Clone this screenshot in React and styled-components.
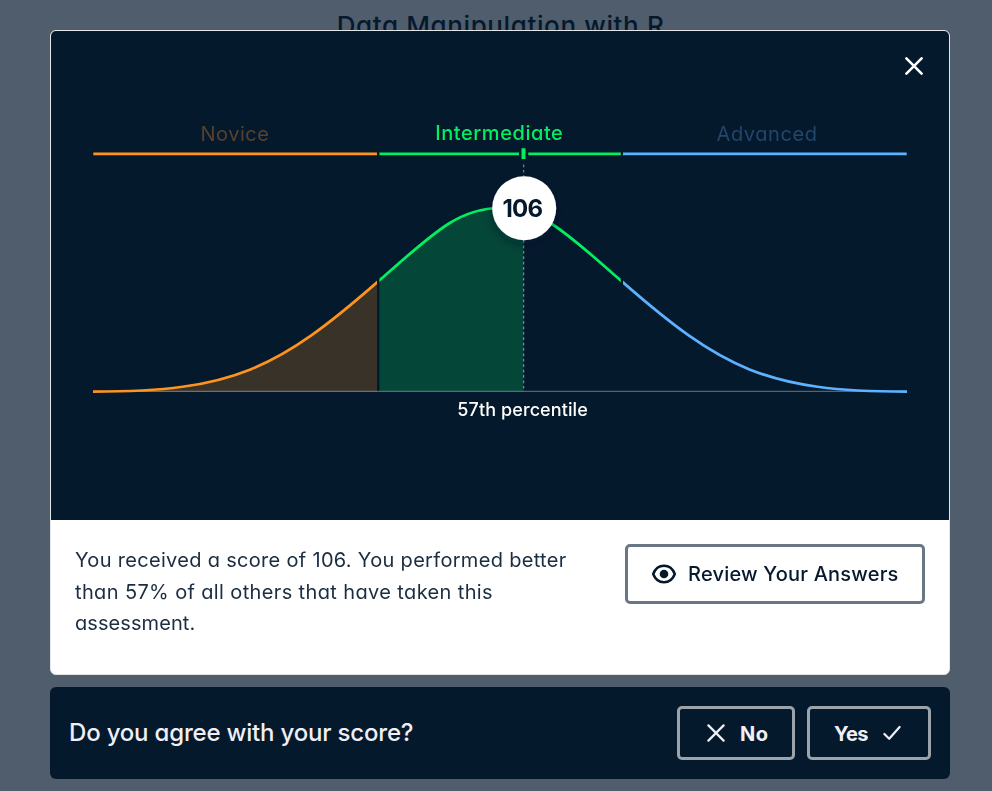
import React from 'react';
import styled, { createGlobalStyle } from 'styled-components';

const navy = '#05192d';
const orange = '#ff931e';
const green = '#03ef62';
const blue = '#5eb1ff';

const GlobalStyle = createGlobalStyle`
  * { box-sizing: border-box; }
  body {
    margin: 0;
    background: #505d6c;
    color: ${navy};
    font-family: Inter, "Liberation Sans", sans-serif;
    font-feature-settings: "cv11", "cv10";
    overflow: hidden;
  }
  button { font: inherit; font-feature-settings: inherit; cursor: pointer; }
`;

const Page = styled.main`
  height: 791px;
  overflow: hidden;
`;

const PageTitle = styled.h1`
  margin: 8px 0 0 9px;
  text-align: center;
  font-size: 26px;
  line-height: 36px;
  font-weight: 500;
  letter-spacing: 0.62px;
`;

const Overlay = styled.div`
  position: fixed;
  inset: 0;
  display: flex;
  flex-direction: column;
  gap: 12px;
  padding: 30px 42px 12px 50px;
`;

const Modal = styled.section`
  height: 645px;
  display: flex;
  flex-direction: column;
  border: 1px solid #e4e7ea;
  border-radius: 6px;
  background: #fff;
  overflow: hidden;
`;

const ChartPanel = styled.div`
  position: relative;
  height: 489px;
  flex: none;
  background: ${navy};
`;

const Chart = styled.svg`
  display: block;
  width: 898px;
  height: 489px;
`;

const ChartText = styled.text`
  font-size: ${(p) => p.$size || 20}px;
  font-weight: ${(p) => p.$weight || 400};
  fill: ${(p) => p.$color};
`;

const CloseButton = styled.button`
  position: absolute;
  top: 19px;
  right: 19px;
  width: 32px;
  height: 32px;
  padding: 0;
  display: grid;
  place-items: center;
  border: 0;
  background: none;
`;

const Result = styled.div`
  flex: 1;
  display: flex;
  justify-content: space-between;
  align-items: flex-start;
  padding: 24px;
`;

const Message = styled.p`
  margin: 0;
  padding-top: 1px;
  font-size: 20px;
  line-height: 31.5px;
  color: #1b2d40;
`;

const Line = styled.span`
  display: block;
  white-space: nowrap;
  letter-spacing: ${(p) => p.$spacing}px;
`;

const OutlineButton = styled.button`
  flex: none;
  display: flex;
  align-items: center;
  width: ${(p) => p.$width}px;
  height: ${(p) => p.$height}px;
  padding: 0 0 0 ${(p) => p.$inset}px;
  gap: ${(p) => p.$gap}px;
  border: 3px solid ${(p) => (p.$dark ? '#9ba3ab' : '#697684')};
  border-radius: 5px;
  background: transparent;
  color: ${(p) => (p.$dark ? '#efeff5' : navy)};
  font-size: 20px;
  font-weight: ${(p) => (p.$dark ? 700 : 500)};
  letter-spacing: ${(p) => p.$spacing}px;
  white-space: nowrap;
`;

const ButtonLabel = styled.span`
  padding-top: ${(p) => p.$drop || 0}px;
`;

const Feedback = styled.section`
  height: 92px;
  display: flex;
  align-items: center;
  justify-content: space-between;
  padding: 0 19px;
  border-radius: 6px;
  background: ${navy};
`;

const Question = styled.h2`
  margin: 0;
  padding-bottom: 2px;
  color: #efeff5;
  font-size: 24px;
  font-weight: 500;
  letter-spacing: -0.19px;
`;

const Actions = styled.div`
  display: flex;
  gap: 12px;
`;

const Cross = ({ color = '#efeff5', width = 2.2 }) => (
  <svg width="18" height="18" viewBox="0 0 18 18" fill="none" stroke={color} strokeWidth={width} strokeLinecap="round">
    <path d="M1.4 1.4 16.6 16.6M16.6 1.4 1.4 16.6" />
  </svg>
);

const Check = () => (
  <svg width="18" height="16" viewBox="0 0 18 16" fill="none" stroke="#efeff5" strokeWidth="2.2" strokeLinecap="round" strokeLinejoin="round">
    <path d="M1.4 9 6.2 13.8 16.6 2" />
  </svg>
);

const Eye = () => (
  <svg width="24" height="20" viewBox="0 0 24 20" fill="none">
    <path d="M1.2 10C3.2 4.6 7.5 1.7 12 1.7S20.8 4.6 22.8 10C20.8 15.4 16.5 18.3 12 18.3S3.2 15.4 1.2 10Z" stroke={navy} strokeWidth="2.6" strokeLinejoin="round" />
    <circle cx="12" cy="10" r="4.3" fill={navy} />
  </svg>
);

const curve =
  'M93 391.7C233 391.7 278 369 378 281.5C433 233.7 458 208 500 208C542 208 567 233.7 622 281.5C722 369 767 391.7 907 391.7';

function ScoreChart() {
  return (
    <Chart viewBox="51 31 898 489">
      <defs>
        <clipPath id="novice"><rect x="92.6" y="170" width="284.4" height="230" /></clipPath>
        <clipPath id="intermediate"><rect x="379.4" y="170" width="241.4" height="230" /></clipPath>
        <clipPath id="reached"><rect x="379.4" y="170" width="144.1" height="221.5" /></clipPath>
        <clipPath id="advanced"><rect x="623" y="170" width="284.4" height="230" /></clipPath>
        <filter id="shadow" x="-50%" y="-50%" width="200%" height="200%">
          <feDropShadow dx="0" dy="4" stdDeviation="5" floodColor={navy} floodOpacity="0.45" />
        </filter>
      </defs>

      <ChartText x="200.5" y="141" textLength="68.5" $color="#56412d">Novice</ChartText>
      <ChartText x="435.3" y="140" textLength="127.5" $weight={500} $color={green}>Intermediate</ChartText>
      <ChartText x="716.5" y="141" textLength="100.5" $color="#23466b">Advanced</ChartText>

      <g strokeWidth="2.7">
        <path d="M93.3 153.8H377" stroke={orange} />
        <path d="M379.4 153.8H519M528.3 153.8H620.8" stroke={green} />
        <path d="M623 153.8H906.7" stroke={blue} />
      </g>
      <path d="M523.5 148.2V159" stroke={green} strokeWidth="4" />

      <path d={`${curve}Z`} fill={orange} fillOpacity="0.21" clipPath="url(#novice)" />
      <path d={`${curve}Z`} fill={green} fillOpacity="0.21" clipPath="url(#reached)" />
      <path d="M93 391.3H907" stroke="#fff" strokeOpacity="0.32" strokeWidth="1.3" />
      <path d="M523.6 164.5V391" stroke="#fff" strokeOpacity="0.45" strokeWidth="1.3" strokeDasharray="2.7 2.7" />

      <g fill="none" strokeWidth="2.7">
        <path d={curve} stroke={orange} clipPath="url(#novice)" />
        <path d={curve} stroke={green} clipPath="url(#intermediate)" />
        <path d={curve} stroke={blue} clipPath="url(#advanced)" />
      </g>

      <circle cx="524.2" cy="208.2" r="32" fill="#fff" filter="url(#shadow)" />
      <ChartText x="502.5" y="217" textLength="40.5" $size={24} $weight={650} $color={navy}>106</ChartText>
      <ChartText x="457.3" y="416" textLength="130.5" $size={18} $weight={550} $color="#fff">57th percentile</ChartText>
    </Chart>
  );
}

export default function App() {
  return (
    <>
      <GlobalStyle />
      <Page>
        <PageTitle>Data Manipulation with R</PageTitle>
      </Page>
      <Overlay>
        <Modal>
          <ChartPanel>
            <ScoreChart />
            <CloseButton aria-label="Close"><Cross color="#fff" width={2.6} /></CloseButton>
          </ChartPanel>
          <Result>
            <Message>
              <Line $spacing={0.31}>You received a score of 106. You performed better</Line>
              <Line $spacing={0.37}>than 57% of all others that have taken this</Line>
              <Line $spacing={0.08}>assessment.</Line>
            </Message>
            <OutlineButton $width={300} $height={60} $inset={24} $gap={12} $spacing={0.2}>
              <Eye />
              <ButtonLabel>Review Your Answers</ButtonLabel>
            </OutlineButton>
          </Result>
        </Modal>
        <Feedback>
          <Question>Do you agree with your score?</Question>
          <Actions>
            <OutlineButton $dark $width={118} $height={54} $inset={27} $gap={15} $spacing={0.4}>
              <Cross />
              <ButtonLabel $drop={2}>No</ButtonLabel>
            </OutlineButton>
            <OutlineButton $dark $width={124} $height={54} $inset={24} $gap={15} $spacing={-0.5}>
              <ButtonLabel $drop={2}>Yes</ButtonLabel>
              <Check />
            </OutlineButton>
          </Actions>
        </Feedback>
      </Overlay>
    </>
  );
}
